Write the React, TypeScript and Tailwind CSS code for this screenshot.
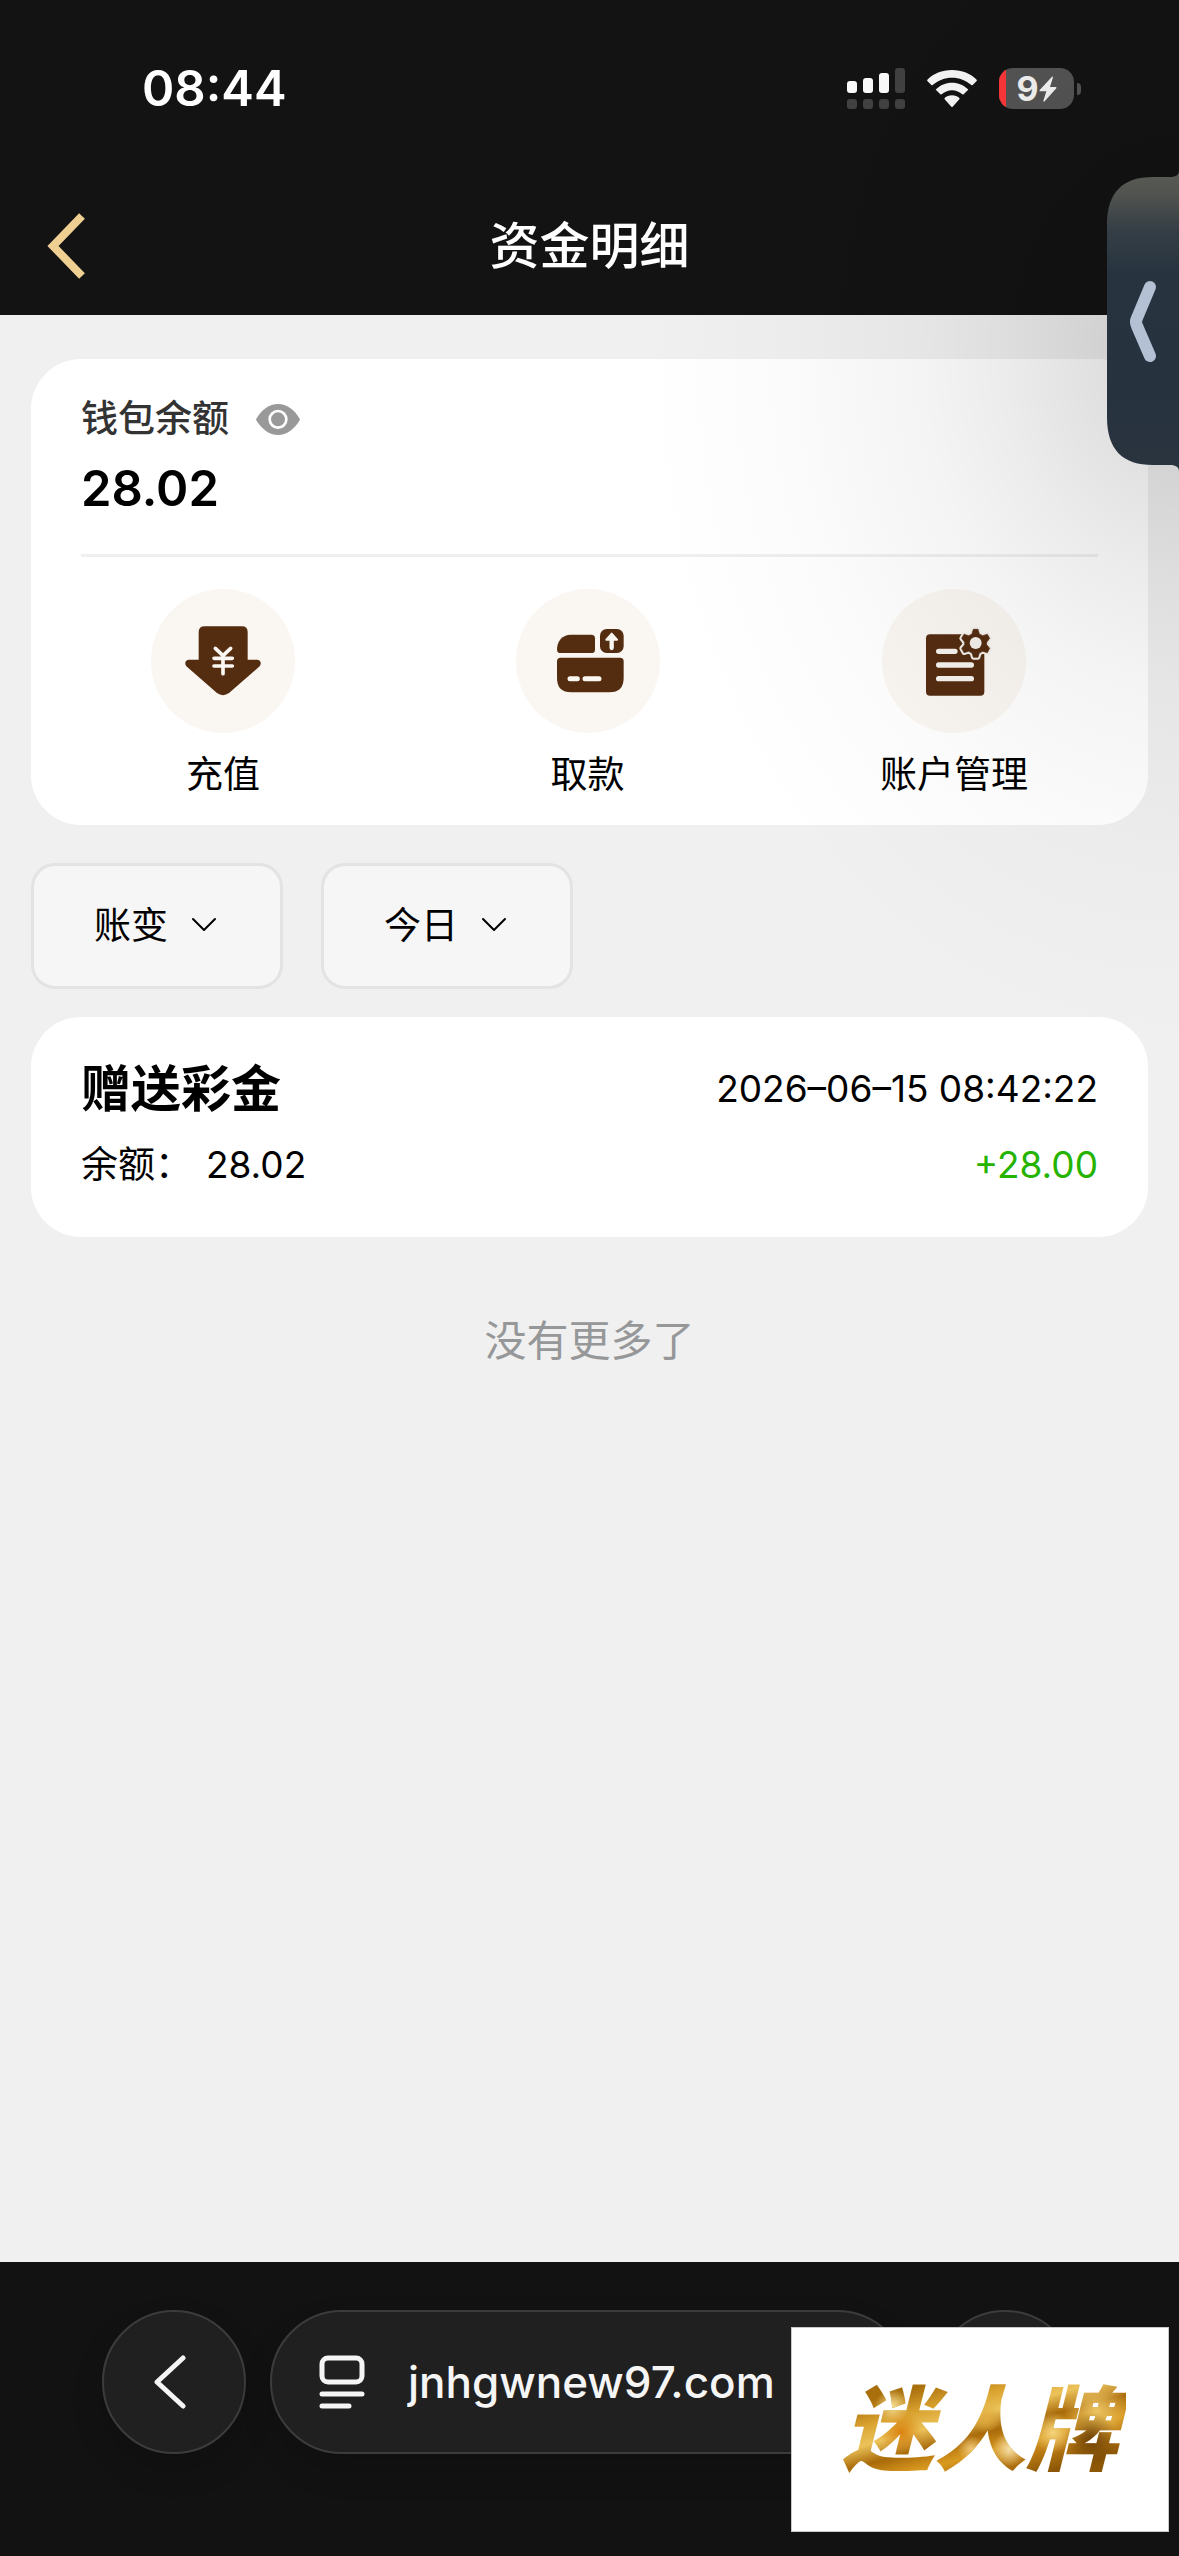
import type { ReactNode } from "react";

const balance = "28.02";

function SignalIcon() {
  return (
    <svg className="h-[41px] w-[58px]" viewBox="0 0 58 41" aria-hidden="true">
      <g fill="#ffffff">
        <rect x="0" y="13" width="10" height="12" rx="3" />
        <rect x="16" y="10" width="10" height="15" rx="3" />
        <rect x="32" y="5" width="10" height="20" rx="3" />
      </g>
      <g fill="#424242">
        <rect x="48" y="0" width="10" height="25" rx="3" />
        <rect x="0" y="31" width="10" height="10" rx="3" />
        <rect x="16" y="31" width="10" height="10" rx="3" />
        <rect x="32" y="31" width="10" height="10" rx="3" />
        <rect x="48" y="31" width="10" height="10" rx="3" />
      </g>
    </svg>
  );
}

function WifiIcon() {
  return (
    <svg className="h-[37px] w-[50px]" viewBox="0 0 150 111" fill="#fafafa" aria-hidden="true">
      <path d="M75 0C45 0 19 11 1 29c-1 1-1 3 0 4l12 12c1 1 3 1 4 0C33 31 53 23 75 23s42 8 58 22c1 1 3 1 4 0l12-12c1-1 1-3 0-4C131 11 105 0 75 0Z" />
      <path d="M75 38c-19 0-35 7-47 19-2 1-2 3 0 4l12 12c1 1 3 1 4 0 8-7 19-12 31-12s23 5 31 12c1 1 3 1 4 0l12-12c2-1 2-3 0-4C110 45 94 38 75 38Z" />
      <path d="M75 76c-9 0-16 3-22 8-1 1-1 3 0 4l20 22c1 1 3 1 4 0l20-22c1-1 1-3 0-4-6-5-13-8-22-8Z" />
    </svg>
  );
}

function Battery() {
  return (
    <div className="flex items-center gap-[3px]" role="img" aria-label="9%">
      <div className="relative flex h-[41px] w-[75px] items-center justify-center overflow-hidden rounded-[14px] bg-[#555555]">
        <div className="absolute inset-y-0 left-0 w-[7px] bg-[#ff3639]" />
        <span className="text-[34px] leading-[40px] font-bold text-[#f6f6f6]">9</span>
        <svg className="h-[26px] w-[18px]" viewBox="0 0 54 78" fill="#f6f6f6" aria-hidden="true">
          <path d="M39 2 2 42c-1 2 0 4 2 4h18l-9 29c0 2 2 3 4 1l35-39c1-2 0-4-2-4H33l9-29c0-2-2-3-3-2Z" />
        </svg>
      </div>
      <div className="h-[12px] w-[4px] rounded-r-full bg-[#555555]" />
    </div>
  );
}

function EyeIcon() {
  return (
    <svg className="h-[31px] w-[44px]" viewBox="0 0 132 93" aria-hidden="true">
      <path d="M1 44C17 17 40 0 66 0s49 17 65 44c1 2 1 3 0 5-16 27-39 44-65 44S17 76 1 49c-1-2-1-3 0-5Z" fill="#999999" />
      <circle cx="66" cy="46" r="25" fill="none" stroke="#ffffff" strokeWidth="8" />
    </svg>
  );
}

function DepositIcon() {
  return (
    <svg className="size-full" viewBox="3 12 432 432" aria-hidden="true">
      <path d="M164 124h112q17 0 17 17v83h28c12 0 14 13 8 20l-92 80q-18 13-36 0l-92-80c-6-7-4-20 8-20h29v-83q0-17 18-17Z" fill="#542c10" />
      <path d="m196 190 23 22 23-22M192 220h55M192 243h55M219 214v52" fill="none" stroke="#faf6f1" strokeWidth="11" strokeLinecap="round" strokeLinejoin="round" />
    </svg>
  );
}

function WithdrawIcon() {
  return (
    <svg className="size-full" viewBox="12 12 432 432" aria-hidden="true">
      <g fill="#542c10">
        <path d="M176 149h62q11 0 11 11v34q0 10-11 10h-92q-11 0-11-10c0-26 16-45 41-45Z" />
        <rect x="264" y="132" width="71" height="72" rx="20" />
        <path d="M146 218h178q11 0 11 11v50q0 43-43 43H178q-43 0-43-43v-50q0-11 11-11Z" />
      </g>
      <path d="M174 281h22M219 281h42" stroke="#faf6f1" strokeWidth="15" strokeLinecap="round" />
      <path d="M299 189v-30" stroke="#faf6f1" strokeWidth="13" strokeLinecap="round" />
      <path d="m299 146 16 18h-32Z" fill="#faf6f1" stroke="#faf6f1" strokeWidth="6" strokeLinejoin="round" />
    </svg>
  );
}

function AccountIcon() {
  const gear =
    "M280 133h14l4 14 10 5 14-4 7 12-9 12v7l9 11-7 13-14-4-10 5-4 13h-14l-4-13-10-5-14 4-7-13 9-11v-7l-9-12 7-12 14 4 10-5Z";
  return (
    <svg className="size-full" viewBox="6 12 432 432" aria-hidden="true">
      <rect x="138" y="148" width="175" height="184" rx="12" fill="#542c10" />
      <path d={gear} fill="#542c10" stroke="#f3efea" strokeWidth="14" strokeLinejoin="round" />
      <path d={gear} fill="#542c10" stroke="#542c10" strokeWidth="2" strokeLinejoin="round" />
      <circle cx="287" cy="174" r="18" fill="#f3efea" />
      <path d="M176 199h49M176 240h98M176 281h98" stroke="#f6f2ed" strokeWidth="16" strokeLinecap="round" />
    </svg>
  );
}

const actions: { label: string; icon: ReactNode }[] = [
  { label: "充值", icon: <DepositIcon /> },
  { label: "取款", icon: <WithdrawIcon /> },
  { label: "账户管理", icon: <AccountIcon /> },
];

const filters = [
  { name: "记录类型", value: "账变" },
  { name: "日期范围", value: "今日" },
];

const records = [
  { title: "赠送彩金", time: "2026–06–15 08:42:22", balance: "28.02", amount: "+28.00" },
];

function Filter({ name, value }: { name: string; value: string }) {
  return (
    <label className="relative">
      <select
        aria-label={name}
        className="h-[126px] w-[252px] appearance-none rounded-3xl border-[3px] border-[#e3e3e3] bg-[#f6f6f6] pl-[60px] text-[37px] text-black"
      >
        <option>{value}</option>
      </select>
      <svg
        className="pointer-events-none absolute top-[54px] right-[66px] h-[16px] w-[26px]"
        viewBox="0 0 26 16"
        fill="none"
        stroke="#000000"
        strokeWidth="2"
        strokeLinecap="round"
        strokeLinejoin="round"
        aria-hidden="true"
      >
        <path d="m2 2 11 11L24 2" />
      </svg>
    </label>
  );
}

function SideTab() {
  return (
    <button type="button" aria-label="展开" className="absolute top-[170px] right-0 h-[302px] w-[72px]">
      <svg className="size-full" viewBox="0 0 72 302" aria-hidden="true">
        <defs>
          <linearGradient id="tab" x1="0" y1="0" x2="0" y2="1">
            <stop offset="0" stopColor="#595a54" />
            <stop offset="0.08" stopColor="#51544f" />
            <stop offset="0.2" stopColor="#353e45" />
            <stop offset="0.34" stopColor="#27343f" />
            <stop offset="0.7" stopColor="#26323e" />
            <stop offset="1" stopColor="#29343f" />
          </linearGradient>
        </defs>
        <path d="M72 0v302c0-5-3-7-9-7H46C16 295 0 280 0 247V55C0 22 16 7 46 7h17c6 0 9-2 9-7Z" fill="url(#tab)" />
        <path d="M43 117 30 148q-2 4 0 8l13 30" fill="none" stroke="#b4c1d5" strokeWidth="12" strokeLinecap="round" strokeLinejoin="round" />
      </svg>
    </button>
  );
}

export default function App() {
  return (
    <div className="relative flex min-h-screen flex-col overflow-hidden bg-[#f0f0f0] font-['Inter','Noto_Sans_CJK_SC',sans-serif] text-black">
      <header className="bg-[#131313] text-white">
        <div className="flex h-[177px] items-center justify-between pr-[98px] pl-[142px]">
          <time className="text-[49px] leading-[60px] font-semibold">08:44</time>
          <div className="flex items-center gap-[22px]">
            <SignalIcon />
            <WifiIcon />
            <Battery />
          </div>
        </div>
        <div className="grid h-[138px] grid-cols-[120px_1fr_120px] items-center">
          <button type="button" aria-label="返回" className="flex h-full items-center pl-[46px]">
            <svg className="h-[66px] w-[40px]" viewBox="0 0 40 66" fill="none" stroke="#f0cf93" strokeWidth="8" aria-hidden="true">
              <path d="M36 3 7 33l29 30" />
            </svg>
          </button>
          <h1 className="text-center text-[50px] leading-[72px] font-medium">资金明细</h1>
        </div>
      </header>

      <main className="flex-1 px-[31px] pt-11">
        <section className="rounded-[50px] bg-white pt-8 pb-[22px]">
          <div className="px-[50px]">
            <div className="flex items-center gap-[27px]">
              <h2 className="text-[37px] leading-[56px] font-medium text-[#333333]">钱包余额</h2>
              <button type="button" aria-label="显示或隐藏余额">
                <EyeIcon />
              </button>
            </div>
            <p className="mt-3 text-[49px] leading-[60px] font-semibold">{balance}</p>
            <hr className="mt-[35px] border-t-[3px] border-[#f0f0f0]" />
          </div>
          <div className="mt-8 flex justify-between px-[120px]">
            {actions.map((action) => (
              <button key={action.label} type="button" className="flex flex-col items-center">
                <span className="size-36 rounded-full bg-[#faf6f1]">{action.icon}</span>
                <span className="mt-[14px] text-[37px] leading-[56px]">{action.label}</span>
              </button>
            ))}
          </div>
        </section>

        <div className="mt-[38px] flex gap-[38px]">
          {filters.map((filter) => (
            <Filter key={filter.name} name={filter.name} value={filter.value} />
          ))}
        </div>

        <ul className="mt-7">
          {records.map((record) => (
            <li key={record.time} className="rounded-[50px] bg-white px-[50px] pt-9 pb-[44px]">
              <div className="flex items-center justify-between">
                <h3 className="text-[50px] leading-[72px] font-bold">{record.title}</h3>
                <time className="text-[37px] leading-[56px]">{record.time}</time>
              </div>
              <div className="mt-3 flex items-center justify-between text-[37px] leading-[56px]">
                <p className="flex gap-[14px]">
                  <span>余额：</span>
                  <span>{record.balance}</span>
                </p>
                <p className="text-[#26b300]">{record.amount}</p>
              </div>
            </li>
          ))}
        </ul>

        <p className="mt-[74px] text-center text-[42px] leading-[60px] text-[#969799]">没有更多了</p>
      </main>

      <footer className="relative h-[294px] bg-[#121212] px-[102px] pt-12">
        <div className="flex gap-6 text-[#f5f5f5]">
          <button
            type="button"
            aria-label="后退"
            className="flex size-36 items-center justify-center rounded-full border-2 border-[#3c3c3c] bg-[#202020] pr-2 shadow-[0_16px_32px_rgba(0,0,0,0.15)]"
          >
            <svg className="h-[54px] w-[32px]" viewBox="0 0 32 54" fill="none" stroke="currentColor" strokeWidth="5" strokeLinecap="round" strokeLinejoin="round" aria-hidden="true">
              <path d="M29 3 3 27l26 24" />
            </svg>
          </button>
          <div className="flex h-36 flex-1 items-center gap-[43px] rounded-full border-2 border-[#3c3c3c] bg-[#202020] pl-[47px] shadow-[0_16px_32px_rgba(0,0,0,0.15)]">
            <svg className="h-[54px] w-[46px]" viewBox="0 0 46 54" fill="none" stroke="currentColor" strokeWidth="5" strokeLinecap="round" aria-hidden="true">
              <rect x="3" y="3" width="40" height="24" rx="6" />
              <path d="M3 39h40M3 51h27" />
            </svg>
            <a href="#" className="text-[44px] leading-[56px] font-medium">
              jnhgwnew97.com
            </a>
          </div>
          <button
            type="button"
            aria-label="更多"
            className="size-36 rounded-full border-2 border-[#3c3c3c] bg-[#202020]"
          />
        </div>
        <div className="absolute right-[10px] bottom-6 flex h-[205px] w-[378px] items-center justify-center border border-[#c8c8c8] bg-white">
          <span className="bg-[radial-gradient(circle_at_20%_30%,#f6dc90_0,transparent_7%),radial-gradient(circle_at_23%_52%,#d9820f_0,transparent_9%),radial-gradient(circle_at_60%_66%,#f5dfa8_0,transparent_9%),radial-gradient(circle_at_47%_66%,#f0c878_0,transparent_8%),radial-gradient(circle_at_75%_52%,#f5d37c_0,transparent_9%),radial-gradient(circle_at_88%_58%,#6e4308_0,transparent_10%),radial-gradient(circle_at_90%_34%,#ecc463_0,transparent_12%),radial-gradient(circle_at_52%_40%,#e0ac40_0,transparent_9%),linear-gradient(165deg,#a86f0c_20%,#d9a22f_32%,#ecc35a_42%,#a96a0a_52%,#d99a20_62%,#b87812_70%,#8c5706_80%)] bg-clip-text px-2 text-[92px] leading-[120px] font-black text-transparent italic">
            迷人牌
          </span>
        </div>
      </footer>

      <div className="pointer-events-none absolute top-0 right-0 h-[1030px] w-[540px] bg-[radial-gradient(540px_700px_at_100%_350px,rgba(0,0,0,0.16)_0%,rgba(0,0,0,0.118)_17%,rgba(0,0,0,0.076)_33%,rgba(0,0,0,0.045)_48%,rgba(0,0,0,0.014)_73%,rgba(0,0,0,0)_100%)]" />
      <SideTab />
    </div>
  );
}
